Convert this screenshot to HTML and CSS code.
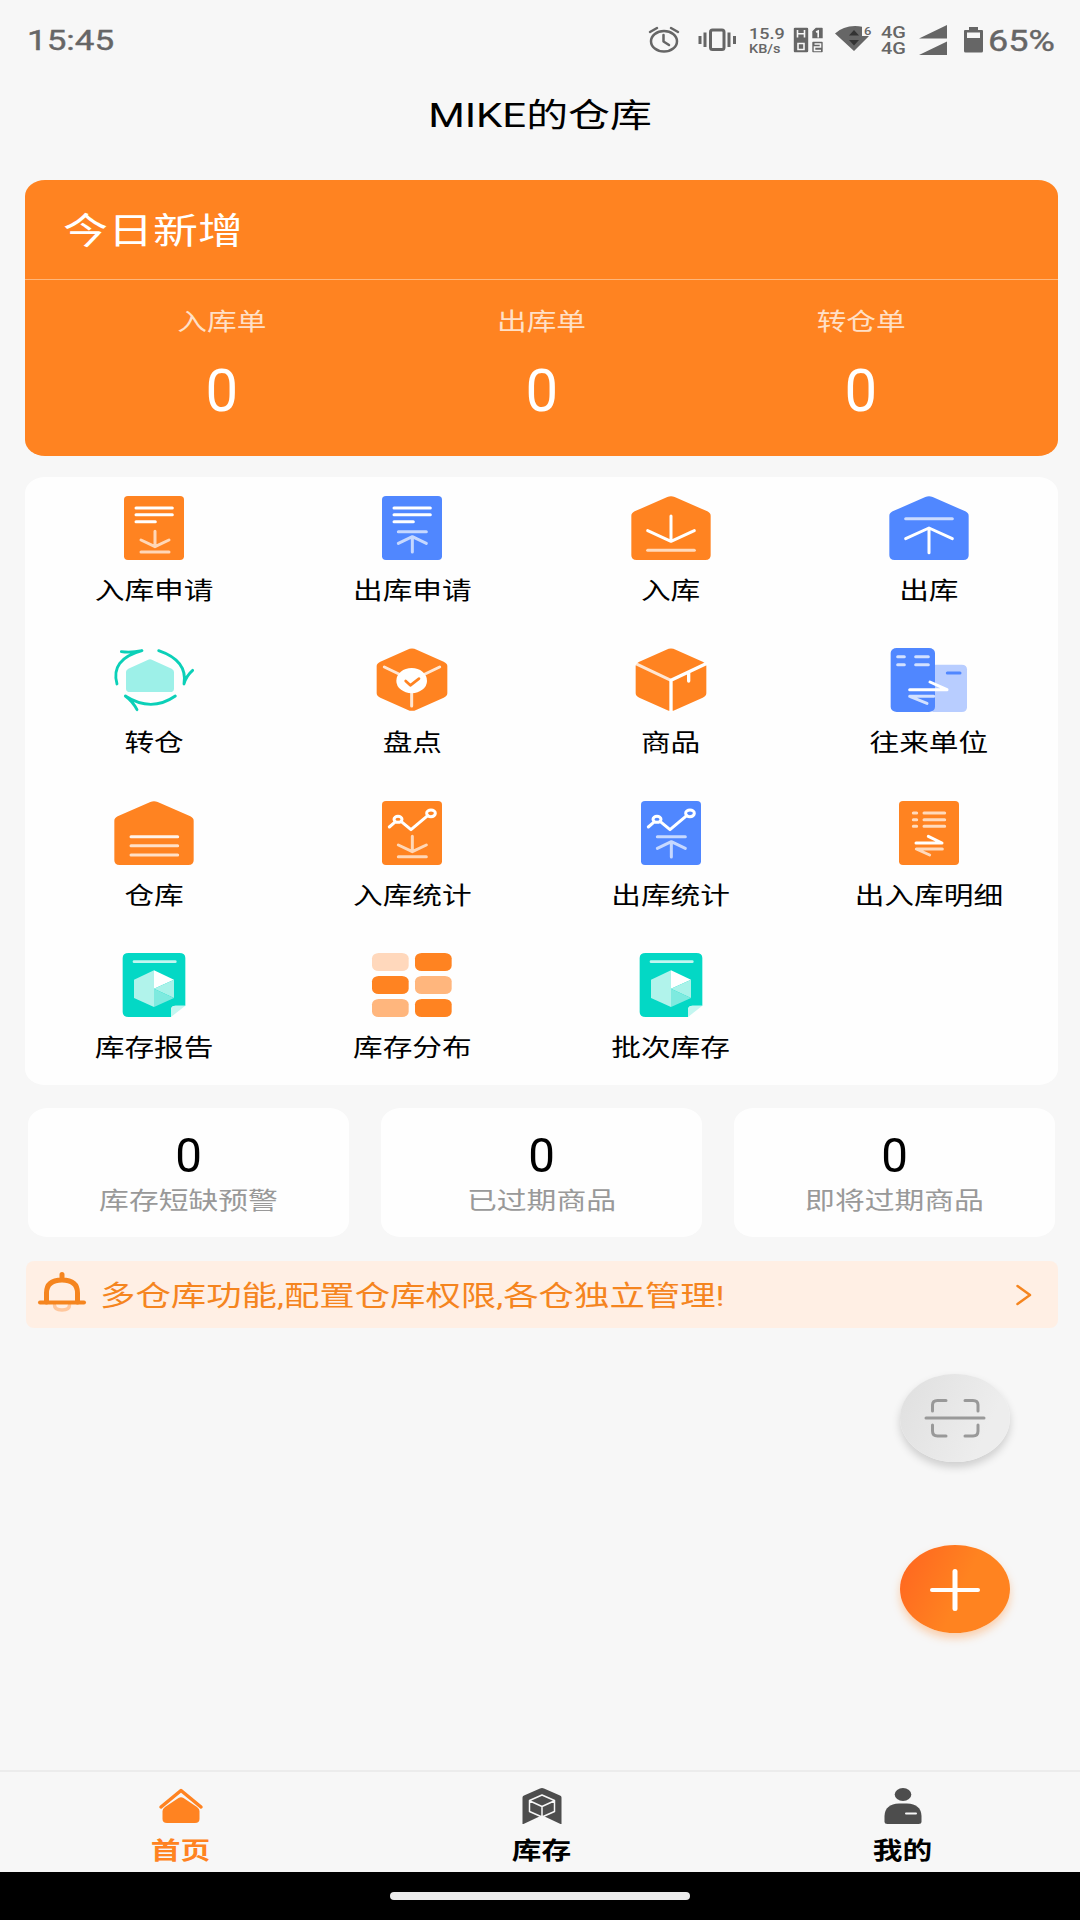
FILE: index.html
```html
<!DOCTYPE html>
<html lang="zh-CN">
<head>
<meta charset="utf-8">
<title>MIKE的仓库</title>
<link rel="stylesheet" href="styles.css">
</head>
<body>
<svg class="defs" aria-hidden="true">
  <defs>
    <symbol id="doc" viewBox="0 0 240 192"><rect x="30" width="180" height="192" rx="12" ry="11"/></symbol>
    <symbol id="house" viewBox="0 0 240 192"><path d="M109 3q11-5 22 0l98 43q10 5 10 13v119q0 14-16 14H17q-16 0-16-14V59q0-8 10-13z"/></symbol>
    <symbol id="hexa" viewBox="0 0 240 192"><path d="M106 5q14-7 28 0l81 36q11 5 11 13v82q0 8-11 13l-81 36q-14 7-28 0l-81-36q-11-5-11-13V54q0-8 11-13z"/></symbol>
    <symbol id="report" viewBox="0 0 240 192">
      <path fill="#03d8c5" d="M44 0h152q18 0 18 15v143h-29q-14 0-14 12v22H44q-18 0-18-15V15Q26 0 44 0z"/>
      <path fill="#c3f6f0" d="M171 192v-22q0-12 14-12h29z"/>
      <path stroke="#c3f6f0" d="M60 26h124"/>
      <path fill="#b1f3eb" d="M120 52v110l-60-27V80z"/>
      <path fill="#fff" d="M120 52l60 28-60 27z"/>
      <path fill="#a9f2e9" d="M180 80v55l-60-28z"/>
      <path fill="#7eeadf" d="M120 107l60 28-60 27z"/>
    </symbol>
    <symbol id="trend" viewBox="0 0 240 192">
      <path d="M52 78l16-14M88 62l29 24 50-42" stroke-width="9"/>
      <ellipse cx="78" cy="55" rx="12" ry="9" stroke-width="9"/><ellipse cx="177" cy="37" rx="13" ry="10" stroke-width="9"/>
    </symbol>
  </defs>
</svg>
<div class="screen">
  <header class="status">
    <span class="clock sq">15:45</span>
    <svg class="s-alarm" viewBox="0 0 30 26"><ellipse cx="15" cy="14.2" rx="13" ry="10.3"/><path d="M1 5l7-4M29 5l-7-4M14.5 8v6.5l5.500 3.500"/></svg>
    <svg class="s-vibrate" viewBox="0 0 38 24"><rect x="12.500" y="2" width="13.500" height="19.500" rx="2"/><path d="M2 8v8M7 4.500v14.500M31 4.500v14.500M36.500 8v8"/></svg>
    <span class="speed"><span class="rate sq">15.9</span><span class="unit sq">KB/s</span></span>
    <svg class="s-hd" viewBox="0 0 30 26"><path fill="#666" d="M2 0h12q2 0 2 2v22q0 2-2 2H2q-2 0-2-2V2q0-2 2-2zM22.500 0H29q1.500 0 1.500 1.500v10.500H18.500V4zM20 14h9q1.500 0 1.500 1.500v9q0 1.500-1.500 1.500h-9q-1.500 0-1.500-1.500v-9q0-1.500 1.500-1.500z"/><path d="M4.500 3v7.500M11.500 3v7.500M4.500 6.700h7M5 16.500v6h6v-6zM23 5l2.200-1v6.500M21.500 17h6v3h-6v3.500h6.500"/></svg>
    <svg class="s-wifi" viewBox="0 0 38 26"><path fill="#666" d="M0 7.500Q8 0 20 0q4 0 7 .7V10h7L19 25z"/><path fill="#333" d="M14 9.500L19 4l5 5.500zM14 14h10l-5 5.500z"/></svg>
    <span class="wifi-gen sq">6</span>
    <span class="net"><span class="sq">4G</span><span class="sq">4G</span></span>
    <svg class="s-signal" viewBox="0 0 28 30"><path fill="#666" d="M28 0v13.500H0zM28 16.500V30H0z"/></svg>
    <svg class="s-battery" viewBox="0 0 19 26"><path fill="#666" fill-rule="evenodd" d="M5 0h9v3h4q1 0 1 1v20q0 1.500-1.500 1.500h-16Q0 25.500 0 24V4q0-1 1-1h4zM3 5.500v5.500h13V5.500z"/></svg>
    <span class="percent sq">65%</span>
  </header>

  <h1 class="title"><span class="sq">MIKE的仓库</span></h1>

  <section class="today">
    <h2><span class="sq">今日新增</span></h2>
    <div class="today-row">
      <div><span class="lab sq">入库单</span><span class="num">0</span></div>
      <div><span class="lab sq">出库单</span><span class="num">0</span></div>
      <div><span class="lab sq">转仓单</span><span class="num">0</span></div>
    </div>
  </section>

  <section class="menu">
    <a><svg viewBox="0 0 240 192"><use href="#doc" class="or"/><path d="M66 36h109M66 56h109M66 77h58"/><g opacity=".68"><path d="M123 106v44M81 132l42 20 42-20M81 168h84"/></g></svg><span class="sq">入库申请</span></a>
    <a><svg viewBox="0 0 240 192"><use href="#doc" class="bl"/><path d="M66 36h109M66 56h109M66 77h58"/><g opacity=".68"><path d="M121 124v44M79 142l42-20 42 20M79 107h84"/></g></svg><span class="sq">出库申请</span></a>
    <a><svg viewBox="0 0 240 192"><use href="#house" class="or"/><path d="M120 60v74M50 104l70 32 70-32"/><path opacity=".7" d="M50 163h140"/></svg><span class="sq">入库</span></a>
    <a><svg viewBox="0 0 240 192"><use href="#house" class="bl"/><path d="M120 98v72M50 128l70-32 70 32"/><path opacity=".7" d="M50 68h140"/></svg><span class="sq">出库</span></a>

    <a><svg viewBox="0 0 240 192"><path fill="#9df0e8" stroke="none" d="M101 36q7-4 14 0l58 26q7 4 7 10v50q0 10-12 10H48q-12 0-12-10V72q0-6 7-10z"/><path class="tl" d="M9 108Q-12 34 84 8Q50 15 22 11M134 8Q222 38 210 108Q216 84 236 67M184 144Q112 194 34 144Q56 160 69 185"/></svg><span class="sq">转仓</span></a>
    <a><svg viewBox="0 0 240 192"><use href="#hexa" class="or"/><path opacity=".8" d="M37 57l50 24M203 57l-50 24M119 130v44"/><ellipse cx="119" cy="98" rx="46" ry="38" fill="#fff" stroke="none"/><path class="ol" d="M101 99l14 13 26-20"/></svg><span class="sq">盘点</span></a>
    <a><svg viewBox="0 0 240 192"><use href="#hexa" class="or"/><path stroke-width="10" d="M120 97v94M120 97l108-51M173 75v24"/><path opacity=".8" d="M120 97L14 47"/></svg><span class="sq">商品</span></a>
    <a><svg viewBox="0 0 240 192"><path fill="#b8cdff" stroke="none" d="M130 50h88q16 0 16 14v114q0 14-16 14h-88z"/><rect x="5" width="133" height="192" rx="18" ry="15" fill="#5087ff" stroke="none"/><path opacity=".75" d="M26 26h20M80 26h38M26 50h20M80 50h38M62 145h72M64 146l50 20"/><path d="M62 125h112l-51-23"/><path stroke="#5087ff" d="M175 75h38"/></svg><span class="sq">往来单位</span></a>

    <a><svg viewBox="0 0 240 192"><use href="#house" class="or"/><path opacity=".9" d="M51 107h140"/><path opacity=".75" d="M51 134h140M51 162h140"/></svg><span class="sq">仓库</span></a>
    <a><svg viewBox="0 0 240 192"><use href="#doc" class="or"/><use href="#trend"/><g opacity=".68"><path d="M121 106v44M79 132l42 20 42-20M79 167h84"/></g></svg><span class="sq">入库统计</span></a>
    <a><svg viewBox="0 0 240 192"><use href="#doc" class="bl"/><use href="#trend"/><g opacity=".68"><path d="M121 124v44M79 142l42-20 42 20M79 107h84"/></g></svg><span class="sq">出库统计</span></a>
    <a><svg viewBox="0 0 240 192"><use href="#doc" class="or"/><path opacity=".7" d="M73 36h10M105 36h62M73 56h10M105 56h62M73 76h10M105 76h62M160 144H82l40 18"/><path d="M81 126h78l-41-20"/></svg><span class="sq">出入库明细</span></a>

    <a><svg viewBox="0 0 240 192"><use href="#report" class="rp"/></svg><span class="sq">库存报告</span></a>
    <a><svg viewBox="0 0 240 192"><g stroke="none"><g fill="#ff8321"><rect x="129" width="110" height="54" rx="20" ry="16"/><rect y="69" width="110" height="54" rx="20" ry="16"/><rect x="129" y="138" width="110" height="54" rx="20" ry="16"/></g><g fill="#ffb67d"><rect x="129" y="69" width="110" height="54" rx="20" ry="16"/><rect y="138" width="110" height="54" rx="20" ry="16"/></g><rect width="110" height="54" rx="20" ry="16" fill="#ffd8bc"/></g></svg><span class="sq">库存分布</span></a>
    <a><svg viewBox="0 0 240 192"><use href="#report" class="rp"/></svg><span class="sq">批次库存</span></a>
  </section>

  <section class="alerts">
    <div><span class="num">0</span><span class="lab sq">库存短缺预警</span></div>
    <div><span class="num">0</span><span class="lab sq">已过期商品</span></div>
    <div><span class="num">0</span><span class="lab sq">即将过期商品</span></div>
  </section>

  <section class="notice">
    <svg class="bell" viewBox="0 0 48 40"><path stroke="#ffc79d" stroke-width="3.500" d="M16.500 33q0 5 7.500 5t7.500-5"/><path stroke-width="5" d="M8.500 30V21Q8.500 8 24 8t15.500 13v9M24 7V2.500"/><path stroke-width="4" d="M2 30.500h44"/></svg>
    <span class="sq">多仓库功能,配置仓库权限,各仓独立管理!</span>
    <svg class="chev" viewBox="0 0 16 20"><path stroke-width="2.500" d="M1.500 1L14 10 1.500 19"/></svg>
  </section>

  <div class="fabs">
    <button class="fab scan"><svg viewBox="0 0 60 38"><path d="M7.500 12V6q0-4.500 5-4.500H21M40 1.500h8q5 0 5 4.500v6M53 26v6q0 5-5 5h-8M21 37h-8.500q-5 0-5-5v-6M1 19h58"/></svg></button>
    <button class="fab add"><svg viewBox="0 0 50 42"><path d="M2 21h46" stroke-width="4"/><path d="M25 2.500v37" stroke-width="5"/></svg></button>
  </div>

  <nav class="tabs">
    <a class="on"><svg viewBox="0 0 44 36"><path d="M2 19L22 2.500 42 19" fill="none" stroke="#ff8321" stroke-width="3.500" stroke-linecap="round" stroke-linejoin="round"/><path fill="#ff8321" d="M19.500 10q2.500-1.500 5 0L38 19q2.500 2 2.500 4v8q0 4-4.500 4H8q-4.500 0-4.500-4v-8q0-2 2.500-4z"/></svg><span class="sq">首页</span></a>
    <a><svg viewBox="0 0 40 36"><path fill="#4d4d4d" d="M18 .5q2-1 4 0l16 7q1.500.7 1.500 2V36h-1L21.500 28h-3L1.500 36h-1V9.500q0-1.300 1.500-2z"/><path fill="none" stroke="#f7f7f7" stroke-width="1.500" d="M20 7l12.500 5.500v11L20 29 7.500 23.500v-11zM8 13l12 5.500L32 13M20 18.500V30"/></svg><span class="sq">库存</span></a>
    <a><svg viewBox="0 0 38 36"><path fill="#4d4d4d" d="M15 15.500h8Q37 16 37.500 28v5.500q0 2.500-3 2.500h-31q-3 0-3-2.500V28Q1 16 15 15.500z"/><ellipse cx="19" cy="6.500" rx="8.300" ry="6.500" fill="#4d4d4d"/><path stroke="#f7f7f7" stroke-width="2" d="M22 25.500h10"/></svg><span class="sq">我的</span></a>
  </nav>
  <footer class="gesture"><i></i></footer>
</div>
</body>
</html>
```
FILE: styles.css
```css
* { box-sizing: border-box; margin: 0; padding: 0; }
body { width: 1080px; height: 1920px; background: #f7f7f7; color: #000; font-family: Roboto, "Noto Sans CJK SC", sans-serif; }
svg { display: block; overflow: visible; fill: none; stroke-linecap: round; stroke-linejoin: round; }
.defs { position: absolute; width: 0; height: 0; }
.screen { position: relative; display: flex; flex-direction: column; width: 1080px; height: 1920px; overflow: hidden; }

/* Text is drawn wide: full width, four fifths of the height */
.sq { display: block; transform: scaleY(.8); white-space: nowrap; }

.status { display: flex; align-items: center; height: 81px; padding: 0 27px; color: #666; flex: none; font-weight: 500; }
.status svg { stroke: #666; flex: none; }
.clock { width: 622px; flex: none; font-size: 35px; font-weight: 400; -webkit-text-stroke: .5px #666; }
.s-alarm { width: 30px; height: 26px; margin-top: -2px; stroke-width: 2.500; }
.s-vibrate { width: 38px; height: 24px; margin-left: 19px; margin-top: -1px; stroke-width: 3; stroke-linecap: butt; }
.speed { display: flex; flex-direction: column; flex: none; width: 44px; margin-left: 13px; }
.rate { font-size: 18px; line-height: 16px; }
.unit { font-size: 14.500px; line-height: 14px; transform: scaleY(.9); }
.status .s-hd { width: 30px; height: 26px; margin-top: -1px; stroke: #f7f7f7; stroke-width: 1.600; stroke-linecap: butt; stroke-linejoin: miter; }
.status .s-wifi { width: 38px; height: 26px; margin-left: 12px; margin-top: -3px; stroke: none; }
.wifi-gen { flex: none; width: 17px; margin: -18px 0 0 -9px; font-size: 13px; line-height: 12px; }
.net { flex: none; width: 38px; margin-top: -1px; font-size: 20px; line-height: 16px; }
.status .s-signal { width: 28px; height: 30px; stroke: none; margin-top: -2px; }
.status .s-battery { width: 19px; height: 26px; margin-left: 17px; margin-top: -1px; stroke: none; }
.percent { flex: none; margin-left: 5px; font-size: 36px; font-weight: 400; -webkit-text-stroke: .5px #666; }

.title { height: 99px; padding-top: 5px; font-size: 41.900px; line-height: 60px; font-weight: 400; text-align: center; flex: none; }

.today { height: 276px; margin: 0 22px 0 25px; border-radius: 20px / 16px; background: #ff8321; color: #fff; flex: none; }
.today h2 { height: 100px; padding: 22px 0 0 38px; border-bottom: 1px solid #ffb67b; font-size: 45px; line-height: 60px; font-weight: 400; }
.today-row { display: grid; grid-template-columns: repeat(3, 1fr); padding: 22px 37px 0; text-align: center; }
.today .lab { font-size: 29.700px; line-height: 40px; color: #ffe0c7; }
.num { display: block; transform: scale(.88, .9); }
.today .num { font-size: 66px; line-height: 70px; margin-top: 14px; }

.menu { display: grid; grid-template-columns: repeat(4, 1fr); grid-auto-rows: 152.300px; height: 608px; margin: 21px 22px 0 25px; padding-top: 19px; border-radius: 20px / 16px; background: #fefefe; flex: none; }
.menu a { display: flex; flex-direction: column; align-items: center; font-size: 29.700px; line-height: 40px; }
.menu svg { width: 80px; height: 64px; margin-bottom: 11px; stroke: #fff; stroke-width: 9; }
.menu .or { fill: #ff8321; stroke: none; }
.menu .bl { fill: #5087ff; stroke: none; }
.menu .tl { stroke: #0bd0b8; stroke-width: 8.500; }
.menu .ol { stroke: #ff8321; stroke-width: 8; }
.menu .rp { stroke: none; }
#report path[stroke] { stroke-width: 8; }

.alerts { display: grid; grid-template-columns: repeat(3, 1fr); gap: 32px; height: 129px; margin: 23px 25px 0 28px; text-align: center; flex: none; }
.alerts div { padding-top: 18px; border-radius: 20px / 16px; background: #fefefe; }
.alerts .num { font-size: 54px; line-height: 60px; }
.alerts .lab { margin-top: -5px; font-size: 29.800px; line-height: 40px; color: #999; }

.notice { display: flex; align-items: center; height: 67px; margin: 24px 22px 0 26px; padding: 0 26px 0 12px; border-radius: 8px; background: #ffefe4; color: #f5851f; font-size: 35.400px; line-height: 50px; flex: none; }
.notice .sq { margin-top: 2px; }
.notice svg { stroke: #f5851f; flex: none; }
.bell { width: 48px; height: 40px; margin-right: 14px; margin-top: -6px; }
.chev { width: 16px; height: 20px; margin-left: auto; }

.fabs { position: absolute; left: 900px; top: 1374px; display: flex; flex-direction: column; gap: 83px; }
.fab { display: flex; align-items: center; justify-content: center; width: 110px; height: 88px; border: 0; border-radius: 50%; }
.scan { background: linear-gradient(115deg, #dfdfdf, #ededed 75%); box-shadow: 0 5px 8px rgba(0, 0, 0, .17); }
.scan svg { width: 60px; height: 38px; margin-top: -1px; stroke: #999; stroke-width: 3; }
.add { background: linear-gradient(115deg, #ff6420, #ff8320 55%); box-shadow: 0 5px 9px rgba(255, 131, 33, .35); }
.add svg { width: 50px; height: 42px; margin-top: 1px; stroke: #fff; }

.tabs { display: grid; grid-template-columns: repeat(3, 361px); height: 102px; margin-top: auto; padding-top: 16px; border-top: 2px solid #ececec; flex: none; }
.tabs a { display: flex; flex-direction: column; align-items: center; font-size: 29.700px; line-height: 40px; font-weight: 700; }
.tabs svg { height: 36px; margin-bottom: 7px; }
.on { color: #ff8321; }
.gesture { display: flex; justify-content: center; height: 48px; padding-top: 20px; background: #000; flex: none; }
.gesture i { width: 300px; height: 8px; border-radius: 4px; background: #ebebeb; }
```
